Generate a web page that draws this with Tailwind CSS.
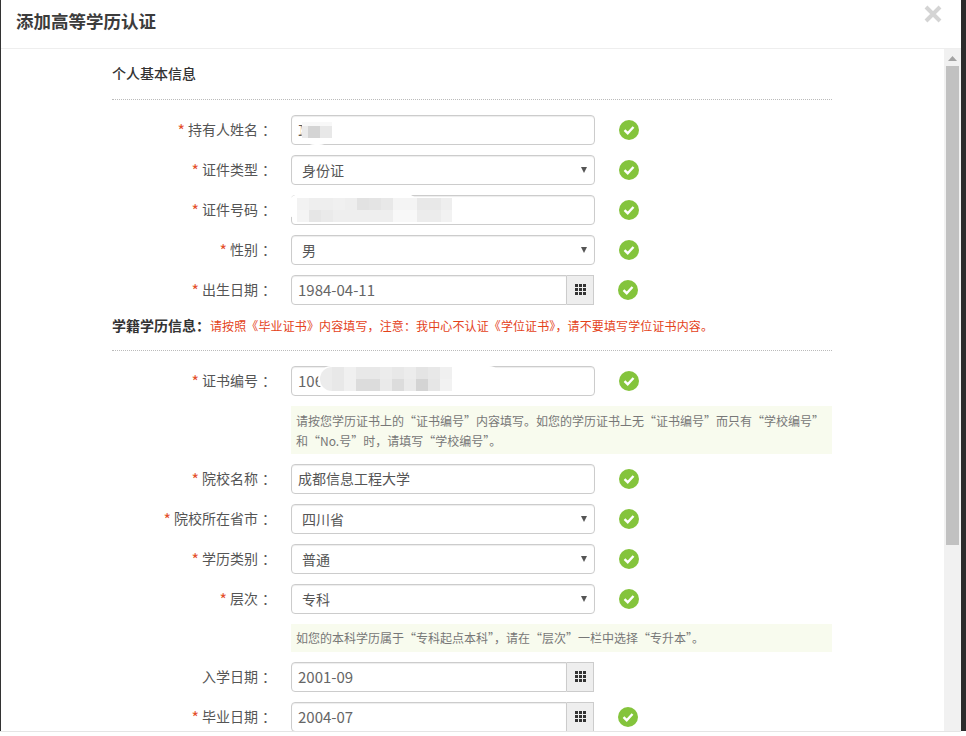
<!DOCTYPE html>
<html lang="zh-CN">
<head>
  <meta charset="UTF-8" />
  <title>添加高等学历认证</title>
  <script src="https://cdn.jsdelivr.net/npm/@tailwindcss/browser@4"></script>
</head>
<body class="bg-white font-['Noto_Sans_CJK_SC','Noto_Sans',sans-serif] text-[14px] text-[#555]">
  <div class="w-[966px] h-[736px] overflow-hidden bg-white flex items-start">
    <div class="w-[961px] h-[732px] shrink-0 border-b border-b-[#e5e5e5] flex flex-col bg-white">
      <div class="h-[731px] border-l border-l-[#333] flex flex-col">

      <!-- header -->
      <div class="h-[49px] shrink-0 border-b border-[#eee] flex justify-between pl-[15px] pr-[19px]">
        <h1 class="text-[17.5px] leading-[42px] font-bold text-[#3c3c3c]">添加高等学历认证</h1>
        <svg class="mt-[5px]" width="18" height="18" viewBox="0 0 18 18"><path d="M2 2L16 16M16 2L2 16" stroke="#d4d4d4" stroke-width="4"/></svg>
      </div>

      <div class="flex-1 flex min-h-0">
        <div class="flex-1 overflow-hidden pl-[111px] min-w-0">
          <div class="w-[720px]">

            <div class="h-[51px] border-b border-dotted border-[#bbb] pt-[13px] font-medium leading-[22px] text-[14px] text-[#333]">个人基本信息</div>

            <!-- personal rows -->
            <div class="flex flex-col gap-[10px] pt-[15px]">
              <div class="flex items-center h-[30px]">
                <label class="w-[164px] pb-[2px] text-right"><span class="text-[16px] leading-none align-[-2px] text-[#e4502b]">*</span> 持有人姓名<span class="ml-[4px]">：</span></label>
                <div class="relative ml-[15px]">
                  <input value="耳" class="w-[304px] h-[30px] border border-[#ccc] rounded-[4px] px-[6px] shadow-[inset_0_1px_1px_rgba(0,0,0,.075)]" />
                  <svg class="absolute left-[10px] top-[2px]" width="34" height="28"><rect x="0" y="0" width="32" height="28" rx="14" fill="#fff"/><rect x="1" y="5" width="30" height="6" fill="#f8f8f8"/><rect x="1" y="9" width="7" height="12" fill="#ebebeb"/><rect x="7" y="9" width="12" height="12" fill="#d4d4d4"/><rect x="19" y="9" width="12" height="12" fill="#e8e8e8"/></svg>
                </div>
                <svg class="ml-[24px]" width="20" height="20" viewBox="0 0 20 20"><circle cx="10" cy="10" r="10" fill="#84c43c"/><path d="M5.5 10.2L8.7 13.2L14.5 7" fill="none" stroke="#fff" stroke-width="2.4"/></svg>
              </div>
              <div class="flex items-center h-[30px]">
                <label class="w-[164px] pb-[2px] text-right"><span class="text-[16px] leading-none align-[-2px] text-[#e4502b]">*</span> 证件类型<span class="ml-[4px]">：</span></label>
                <div class="relative ml-[15px]">
                  <select class="block w-[304px] h-[30px] border border-[#ccc] rounded-[4px] pl-[10px] appearance-none shadow-[inset_0_1px_1px_rgba(0,0,0,.075)]"><option>身份证</option></select>
                  <svg class="absolute right-[8px] top-[12px]" width="6" height="6"><path d="M0 0H6L3 6Z" fill="#555"/></svg>
                </div>
                <svg class="ml-[24px]" width="20" height="20" viewBox="0 0 20 20"><circle cx="10" cy="10" r="10" fill="#84c43c"/><path d="M5.5 10.2L8.7 13.2L14.5 7" fill="none" stroke="#fff" stroke-width="2.4"/></svg>
              </div>
              <div class="flex items-center h-[30px]">
                <label class="w-[164px] pb-[2px] text-right"><span class="text-[16px] leading-none align-[-2px] text-[#e4502b]">*</span> 证件号码<span class="ml-[4px]">：</span></label>
                <div class="relative ml-[15px]">
                  <input class="w-[304px] h-[30px] border border-[#ccc] rounded-[4px] px-[6px] shadow-[inset_0_1px_1px_rgba(0,0,0,.075)]" />
                  <!-- mosaic over the id number -->
                  <svg class="absolute left-[-4px] top-[-1px]" width="170" height="29">
                    <rect x="0" y="0" width="132" height="26" rx="13" fill="#fff"/>
                    <rect x="10" y="4" width="12" height="12" fill="#f2f2f2"/><rect x="22" y="4" width="24" height="12" fill="#eee"/><rect x="46" y="4" width="12" height="12" fill="#f0f0f0"/><rect x="58" y="4" width="12" height="12" fill="#eee"/><rect x="70" y="4" width="12" height="12" fill="#e2e2e2"/><rect x="82" y="4" width="12" height="12" fill="#e4e4e4"/><rect x="94" y="4" width="12" height="12" fill="#e8e8e8"/><rect x="106" y="4" width="24" height="12" fill="#f4f4f4"/><rect x="130" y="4" width="24" height="12" fill="#e8e8e8"/><rect x="154" y="4" width="11" height="12" fill="#eee"/>
                    <rect x="10" y="16" width="12" height="12" fill="#f4f4f4"/><rect x="22" y="16" width="12" height="12" fill="#e6e6e6"/><rect x="34" y="16" width="12" height="12" fill="#eaeaea"/><rect x="46" y="16" width="60" height="12" fill="#eee"/><rect x="106" y="16" width="24" height="12" fill="#f8f8f8"/><rect x="130" y="16" width="24" height="12" fill="#ececec"/><rect x="154" y="16" width="11" height="12" fill="#f2f2f2"/>
                  </svg>
                </div>
                <svg class="ml-[24px]" width="20" height="20" viewBox="0 0 20 20"><circle cx="10" cy="10" r="10" fill="#84c43c"/><path d="M5.5 10.2L8.7 13.2L14.5 7" fill="none" stroke="#fff" stroke-width="2.4"/></svg>
              </div>
              <div class="flex items-center h-[30px]">
                <label class="w-[164px] pb-[2px] text-right"><span class="text-[16px] leading-none align-[-2px] text-[#e4502b]">*</span> 性别<span class="ml-[4px]">：</span></label>
                <div class="relative ml-[15px]">
                  <select class="block w-[304px] h-[30px] border border-[#ccc] rounded-[4px] pl-[10px] appearance-none shadow-[inset_0_1px_1px_rgba(0,0,0,.075)]"><option>男</option></select>
                  <svg class="absolute right-[8px] top-[12px]" width="6" height="6"><path d="M0 0H6L3 6Z" fill="#555"/></svg>
                </div>
                <svg class="ml-[24px]" width="20" height="20" viewBox="0 0 20 20"><circle cx="10" cy="10" r="10" fill="#84c43c"/><path d="M5.5 10.2L8.7 13.2L14.5 7" fill="none" stroke="#fff" stroke-width="2.4"/></svg>
              </div>
              <div class="flex items-center h-[30px]">
                <label class="w-[164px] pb-[2px] text-right"><span class="text-[16px] leading-none align-[-2px] text-[#e4502b]">*</span> 出生日期<span class="ml-[4px]">：</span></label>
                <div class="flex ml-[15px]">
                  <input value="1984-04-11" class="w-[276px] h-[30px] border border-[#ccc] rounded-l-[4px] px-[6px] pb-[2px] text-[15px] text-[#666] shadow-[inset_0_1px_1px_rgba(0,0,0,.075)]" />
                  <div class="w-[27px] h-[30px] border border-l-0 border-[#ccc] bg-[#eee] flex items-center justify-center pb-[2px]">
                    <svg width="11" height="11"><path d="M0 0h3v3H0zM4 0h3v3H4zM8 0h3v3H8zM0 4h3v3H0zM4 4h3v3H4zM8 4h3v3H8zM0 8h3v3H0zM4 8h3v3H4zM8 8h3v3H8z" fill="#333"/></svg>
                  </div>
                </div>
                <svg class="ml-[24px]" width="20" height="20" viewBox="0 0 20 20"><circle cx="10" cy="10" r="10" fill="#84c43c"/><path d="M5.5 10.2L8.7 13.2L14.5 7" fill="none" stroke="#fff" stroke-width="2.4"/></svg>
              </div>
            </div>

            <!-- education section -->
            <div class="h-[36px] mt-[10px] border-b border-dotted border-[#bbb] leading-[20px] text-[12px] tracking-[.12px] text-[#e4421a]"><span class="font-bold text-[14px] tracking-normal text-[#333]">学籍学历信息：</span>请按照《毕业证书》内容填写，注意：我中心不认证《学位证书》，请不要填写学位证书内容。</div>

            <div class="flex flex-col gap-[10px] pt-[15px]">
              <div class="flex items-center h-[30px]">
                <label class="w-[164px] pb-[2px] text-right"><span class="text-[16px] leading-none align-[-2px] text-[#e4502b]">*</span> 证书编号<span class="ml-[4px]">：</span></label>
                <div class="relative ml-[15px]">
                  <input value="106" class="w-[304px] h-[30px] border border-[#ccc] rounded-[4px] px-[6px] pb-[2px] text-[15px] text-[#666] shadow-[inset_0_1px_1px_rgba(0,0,0,.075)]" />
                  <!-- mosaic over the certificate number -->
                  <svg class="absolute left-[27px] top-0" width="184" height="27">
                    <rect x="0" y="0" width="184" height="26" rx="13" fill="#fff"/>
                    <rect x="2" y="1" width="24" height="24" rx="12" fill="#ececec"/>
                    <rect x="14" y="1" width="12" height="12" fill="#e8e8e8"/><rect x="26" y="1" width="12" height="12" fill="#f0f0f0"/><rect x="38" y="1" width="24" height="12" fill="#e8e8e8"/><rect x="62" y="1" width="12" height="12" fill="#ececec"/><rect x="74" y="1" width="12" height="12" fill="#e8e8e8"/><rect x="86" y="1" width="12" height="12" fill="#ececec"/><rect x="98" y="1" width="12" height="12" fill="#e4e4e4"/><rect x="110" y="1" width="12" height="12" fill="#e8e8e8"/><rect x="122" y="1" width="12" height="12" fill="#f0f0f0"/>
                    <rect x="14" y="13" width="12" height="12" fill="#e8e8e8"/><rect x="26" y="13" width="12" height="12" fill="#f0f0f0"/><rect x="38" y="13" width="24" height="12" fill="#dcdcdc"/><rect x="62" y="13" width="12" height="12" fill="#eaeaea"/><rect x="74" y="13" width="12" height="12" fill="#dcdcdc"/><rect x="86" y="13" width="12" height="12" fill="#eaeaea"/><rect x="98" y="13" width="12" height="12" fill="#d4d4d4"/><rect x="110" y="13" width="12" height="12" fill="#e6e6e6"/><rect x="122" y="13" width="12" height="12" fill="#f2f2f2"/>
                  </svg>
                </div>
                <svg class="ml-[24px]" width="20" height="20" viewBox="0 0 20 20"><circle cx="10" cy="10" r="10" fill="#84c43c"/><path d="M5.5 10.2L8.7 13.2L14.5 7" fill="none" stroke="#fff" stroke-width="2.4"/></svg>
              </div>
              <div class="ml-[179px] w-[541px] h-[48px] bg-[#f8fbee] pl-[5px] pt-[5px] leading-[20px] text-[12px] text-[#777]">请按您学历证书上的“证书编号”内容填写。如您的学历证书上无“证书编号”而只有“学校编号”和“No.号”时，请填写“学校编号”。</div>
              <div class="flex items-center h-[30px]">
                <label class="w-[164px] pb-[2px] text-right"><span class="text-[16px] leading-none align-[-2px] text-[#e4502b]">*</span> 院校名称<span class="ml-[4px]">：</span></label>
                <input value="成都信息工程大学" class="ml-[15px] w-[304px] h-[30px] border border-[#ccc] rounded-[4px] px-[6px] pb-[2px] shadow-[inset_0_1px_1px_rgba(0,0,0,.075)]" />
                <svg class="ml-[24px]" width="20" height="20" viewBox="0 0 20 20"><circle cx="10" cy="10" r="10" fill="#84c43c"/><path d="M5.5 10.2L8.7 13.2L14.5 7" fill="none" stroke="#fff" stroke-width="2.4"/></svg>
              </div>
              <div class="flex items-center h-[30px]">
                <label class="w-[164px] pb-[2px] text-right"><span class="text-[16px] leading-none align-[-2px] text-[#e4502b]">*</span> 院校所在省市<span class="ml-[4px]">：</span></label>
                <div class="relative ml-[15px]">
                  <select class="block w-[304px] h-[30px] border border-[#ccc] rounded-[4px] pl-[10px] appearance-none shadow-[inset_0_1px_1px_rgba(0,0,0,.075)]"><option>四川省</option></select>
                  <svg class="absolute right-[8px] top-[12px]" width="6" height="6"><path d="M0 0H6L3 6Z" fill="#555"/></svg>
                </div>
                <svg class="ml-[24px]" width="20" height="20" viewBox="0 0 20 20"><circle cx="10" cy="10" r="10" fill="#84c43c"/><path d="M5.5 10.2L8.7 13.2L14.5 7" fill="none" stroke="#fff" stroke-width="2.4"/></svg>
              </div>
              <div class="flex items-center h-[30px]">
                <label class="w-[164px] pb-[2px] text-right"><span class="text-[16px] leading-none align-[-2px] text-[#e4502b]">*</span> 学历类别<span class="ml-[4px]">：</span></label>
                <div class="relative ml-[15px]">
                  <select class="block w-[304px] h-[30px] border border-[#ccc] rounded-[4px] pl-[10px] appearance-none shadow-[inset_0_1px_1px_rgba(0,0,0,.075)]"><option>普通</option></select>
                  <svg class="absolute right-[8px] top-[12px]" width="6" height="6"><path d="M0 0H6L3 6Z" fill="#555"/></svg>
                </div>
                <svg class="ml-[24px]" width="20" height="20" viewBox="0 0 20 20"><circle cx="10" cy="10" r="10" fill="#84c43c"/><path d="M5.5 10.2L8.7 13.2L14.5 7" fill="none" stroke="#fff" stroke-width="2.4"/></svg>
              </div>
              <div class="flex items-center h-[30px]">
                <label class="w-[164px] pb-[2px] text-right"><span class="text-[16px] leading-none align-[-2px] text-[#e4502b]">*</span> 层次<span class="ml-[4px]">：</span></label>
                <div class="relative ml-[15px]">
                  <select class="block w-[304px] h-[30px] border border-[#ccc] rounded-[4px] pl-[10px] appearance-none shadow-[inset_0_1px_1px_rgba(0,0,0,.075)]"><option>专科</option></select>
                  <svg class="absolute right-[8px] top-[12px]" width="6" height="6"><path d="M0 0H6L3 6Z" fill="#555"/></svg>
                </div>
                <svg class="ml-[24px]" width="20" height="20" viewBox="0 0 20 20"><circle cx="10" cy="10" r="10" fill="#84c43c"/><path d="M5.5 10.2L8.7 13.2L14.5 7" fill="none" stroke="#fff" stroke-width="2.4"/></svg>
              </div>
              <div class="ml-[179px] w-[541px] h-[28px] bg-[#f8fbee] pl-[5px] leading-[28px] text-[12px] text-[#777]">如您的本科学历属于“专科起点本科”，请在“层次”一栏中选择“专升本”。</div>
              <div class="flex items-center h-[30px]">
                <label class="w-[164px] pb-[2px] text-right">入学日期<span class="ml-[4px]">：</span></label>
                <div class="flex ml-[15px]">
                  <input value="2001-09" class="w-[276px] h-[30px] border border-[#ccc] rounded-l-[4px] px-[6px] pb-[2px] text-[15px] text-[#666] shadow-[inset_0_1px_1px_rgba(0,0,0,.075)]" />
                  <div class="w-[27px] h-[30px] border border-l-0 border-[#ccc] bg-[#eee] flex items-center justify-center pb-[2px]">
                    <svg width="11" height="11"><path d="M0 0h3v3H0zM4 0h3v3H4zM8 0h3v3H8zM0 4h3v3H0zM4 4h3v3H4zM8 4h3v3H8zM0 8h3v3H0zM4 8h3v3H4zM8 8h3v3H8z" fill="#333"/></svg>
                  </div>
                </div>
              </div>
              <div class="flex items-center h-[30px]">
                <label class="w-[164px] pb-[2px] text-right"><span class="text-[16px] leading-none align-[-2px] text-[#e4502b]">*</span> 毕业日期<span class="ml-[4px]">：</span></label>
                <div class="flex ml-[15px]">
                  <input value="2004-07" class="w-[276px] h-[30px] border border-[#ccc] rounded-l-[4px] px-[6px] pb-[2px] text-[15px] text-[#666] shadow-[inset_0_1px_1px_rgba(0,0,0,.075)]" />
                  <div class="w-[27px] h-[30px] border border-l-0 border-[#ccc] bg-[#eee] flex items-center justify-center pb-[2px]">
                    <svg width="11" height="11"><path d="M0 0h3v3H0zM4 0h3v3H4zM8 0h3v3H8zM0 4h3v3H0zM4 4h3v3H4zM8 4h3v3H8zM0 8h3v3H0zM4 8h3v3H4zM8 8h3v3H8z" fill="#333"/></svg>
                  </div>
                </div>
                <svg class="ml-[24px]" width="20" height="20" viewBox="0 0 20 20"><circle cx="10" cy="10" r="10" fill="#84c43c"/><path d="M5.5 10.2L8.7 13.2L14.5 7" fill="none" stroke="#fff" stroke-width="2.4"/></svg>
              </div>
            </div>
          </div>
        </div>

        <!-- scrollbar -->
        <div class="w-[17px] shrink-0 bg-[#f1f1f1] flex flex-col items-center">
          <svg class="mt-[7px]" width="9" height="5"><path d="M0 5L4.5 0L9 5Z" fill="#a3a3a3"/></svg>
          <div class="w-[13px] h-[479px] mt-[5px] bg-[#c1c1c1]"></div>
        </div>
      </div>
      </div>
    </div>
    <div class="w-[5px] h-[731px] shrink-0 bg-[#2b2b2b]"></div>
  </div>
</body>
</html>
